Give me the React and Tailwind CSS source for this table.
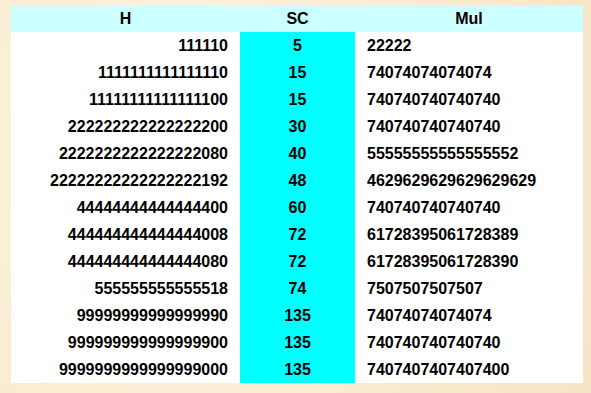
import React from "react";

const rows = [
  ["111110", "5", "22222"],
  ["1111111111111110", "15", "74074074074074"],
  ["11111111111111100", "15", "740740740740740"],
  ["222222222222222200", "30", "740740740740740"],
  ["2222222222222222080", "40", "55555555555555552"],
  ["22222222222222222192", "48", "4629629629629629629"],
  ["44444444444444400", "60", "740740740740740"],
  ["444444444444444008", "72", "61728395061728389"],
  ["444444444444444080", "72", "61728395061728390"],
  ["555555555555518", "74", "7507507507507"],
  ["99999999999999990", "135", "74074074074074"],
  ["999999999999999900", "135", "740740740740740"],
  ["9999999999999999000", "135", "7407407407407400"],
];

export default function App() {
  return (
    <div className="w-[591px] h-[393px] bg-[#fbeed6] bg-[radial-gradient(circle_at_30%_40%,#fdf4e2_0%,#faecd2_60%,#f7e4c4_100%)] pt-[5px] pl-[11px] font-['Liberation_Sans',Arial,sans-serif] font-bold text-[16px] text-black">
      <div className="w-[572px]">
        <div className="flex h-[27px] bg-[#ccffff] items-center">
          <div className="w-[229px] text-center">H</div>
          <div className="w-[115px] text-center">SC</div>
          <div className="w-[228px] text-center">Mul</div>
        </div>
        {rows.map((r, i) => (
          <div key={i} className="flex h-[27px] items-stretch">
            <div className="w-[229px] bg-white flex items-center justify-end pr-[12px]">{r[0]}</div>
            <div className="w-[115px] bg-[#00ffff] flex items-center justify-center">{r[1]}</div>
            <div className="w-[228px] bg-white flex items-center pl-[12px]">{r[2]}</div>
          </div>
        ))}
      </div>
    </div>
  );
}
